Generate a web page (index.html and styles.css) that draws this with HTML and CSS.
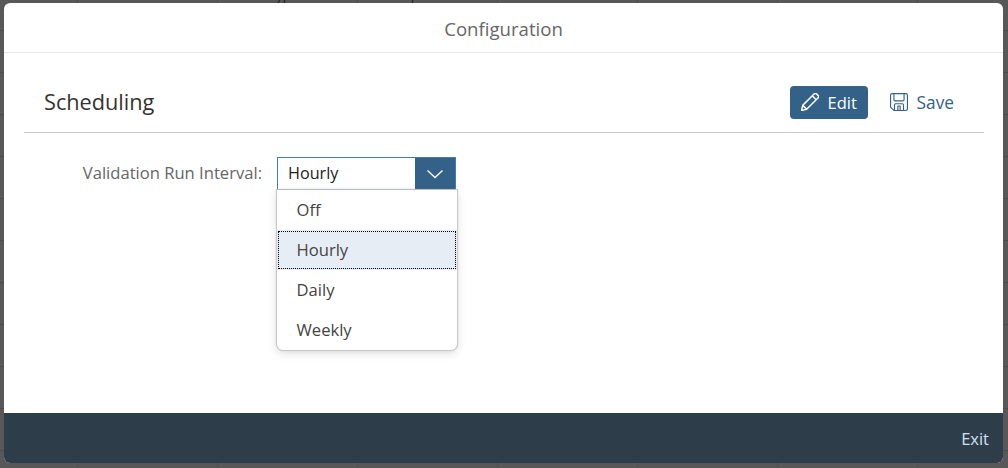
FILE: index.html
```html
<!DOCTYPE html>
<html lang="en">
<head>
<meta charset="utf-8">
<title>Configuration</title>
<link rel="stylesheet" href="styles.css">
</head>
<body>
<div class="backdrop">
  <span class="bg-text bg-a">Version</span>
  <span class="bg-text bg-b">Type</span>
  <span class="bg-text bg-c">Description</span>
</div>
<section class="dialog">
  <header class="dialog-header">Configuration</header>
  <main class="dialog-body">
    <div class="toolbar">
      <h2 class="title">Scheduling</h2>
      <div class="actions">
        <button class="btn btn-active">
          <svg class="icon" viewBox="1 1 16 16" width="18" height="18"><path d="M1.500 16.500l1-4.500L12.600 1.900c.7-.7 1.600-.7 2.300 0l1.200 1.200c.7.7.7 1.600 0 2.300L6 15.500zM2.500 12L6 15.500M11 3.500L14.500 7" fill="none" stroke="#fff" stroke-width="1.300" stroke-linejoin="round"/></svg>
          <span>Edit</span>
        </button>
        <button class="btn btn-plain">
          <svg class="icon" viewBox="1 1 16 16" width="18" height="18"><path d="M1.500 3c0-.8.6-1.500 1.500-1.500h12c.8 0 1.500.7 1.500 1.500v12c0 .8-.7 1.500-1.500 1.500H4.500l-3-3zM4.500 1.500v5.500c0 .6.400 1 1 1h7c.6 0 1-.4 1-1V1.500M5 16.500v-5c0-.6.400-1 1-1h6c.6 0 1 .4 1 1v5M8 12.500h2v4H8z" fill="none" stroke="#346187" stroke-width="1" stroke-linejoin="round"/></svg>
          <span>Save</span>
        </button>
      </div>
    </div>
    <div class="form-row">
      <label class="label">Validation Run Interval:</label>
      <div class="select">
        <div class="select-field">
          <span class="select-value">Hourly</span>
          <span class="select-arrow">
            <svg viewBox="0 0 18 10" width="18" height="10"><path d="M1.500 1.500L9 8.500l7.500-7" fill="none" stroke="#fff" stroke-width="1.300"/></svg>
          </span>
        </div>
        <ul class="menu">
          <li class="item">Off</li>
          <li class="item item-selected">Hourly</li>
          <li class="item">Daily</li>
          <li class="item">Weekly</li>
        </ul>
      </div>
    </div>
  </main>
  <footer class="dialog-footer"><span class="exit">Exit</span></footer>
</section>
</body>
</html>
```
FILE: styles.css
```css
* { box-sizing: border-box; }
html, body { margin: 0; height: 100%; }
body {
  width: 1008px;
  height: 468px;
  overflow: hidden;
  position: relative;
  background: #585858;
  font-family: "Open Sans", "Noto Sans", "Liberation Sans", sans-serif;
  padding: 3px 4px 5px 4px;
}
.backdrop {
  position: absolute;
  left: 0;
  top: 0;
  width: 1008px;
  height: 468px;
  overflow: hidden;
  background:
    repeating-linear-gradient(90deg, transparent 0 77px, #4d4d4d 77px 78px, transparent 78px 140px),
    repeating-linear-gradient(180deg, transparent 0 30px, #4d4d4d 30px 31px, transparent 31px 42px);
}
.bg-text { position: absolute; top: -15px; font-size: 14px; color: #1e1e1e; }
.bg-a { left: 118px; }
.bg-b { left: 268px; }
.bg-c { left: 370px; }
.dialog {
  position: relative;
  width: 999px;
  height: 460px;
  display: flex;
  flex-direction: column;
  background: #fff;
  border-radius: 6px;
  overflow: hidden;
}
.dialog-header {
  height: 50px;
  flex: none;
  display: flex;
  align-items: center;
  justify-content: center;
  padding-top: 2px;
  border-bottom: 1px solid #e5e5e5;
  color: #666;
  font-size: 18.600px;
}
.dialog-body { flex: 1; padding: 0 19px 0 20px; }
.toolbar {
  height: 80px;
  display: flex;
  align-items: center;
  justify-content: space-between;
  border-bottom: 1px solid #ccc;
  padding: 19px 30px 0 20px;
}
.title { margin: 0 0 2px; font-size: 21.700px; font-weight: 400; color: #333; }
.actions { display: flex; gap: 22px; align-items: center; }
.btn {
  height: 33px;
  display: flex;
  align-items: center;
  border: 0;
  border-radius: 4px;
  font: inherit;
  font-size: 17.300px;
  background: none;
}
.btn-active { background: #346187; color: #fff; font-size: 16.500px; font-weight: 500; gap: 9px; padding: 0 10px 0 11px; width: 78px; }
.btn-plain { color: #346187; gap: 9px; padding: 0; }
.icon { display: block; flex: none; }
.form-row { display: flex; align-items: flex-start; padding-top: 24px; }
.label {
  width: 238px;
  height: 33px;
  line-height: 32px;
  text-align: right;
  color: #666;
  font-size: 16.600px;
  white-space: nowrap;
}
.select { position: relative; margin-left: 15px; width: 179px; }
.select-field {
  height: 33px;
  border: 1px solid #427cac;
  display: flex;
  align-items: stretch;
  justify-content: space-between;
}
.select-value { padding-left: 10px; line-height: 30px; font-size: 16.200px; color: #222; }
.select-arrow {
  width: 40px;
  background: #346187;
  display: flex;
  align-items: center;
  justify-content: center;
}
.menu {
  position: absolute;
  left: 0;
  top: 33px;
  width: 180px;
  margin: 0;
  padding: 0;
  list-style: none;
  background: #fff;
  border-radius: 0 0 6px 6px;
  box-shadow: 0 0 1px 1px #c4c4c4, 0 3px 10px rgba(0,0,0,.15);
}
.item {
  height: 40px;
  line-height: 39px;
  padding-left: 19.500px;
  color: #444;
  font-size: 16.600px;
}
.item-selected {
  background: #e7edf5;
  outline: 1px dotted #000;
  outline-offset: -2px;
}
.dialog-footer {
  height: 50px;
  flex: none;
  background: #2e3d4a;
  display: flex;
  align-items: center;
  justify-content: flex-end;
  padding-right: 14px;
}
.exit { color: #cfe0f0; font-size: 16.500px; }
```
